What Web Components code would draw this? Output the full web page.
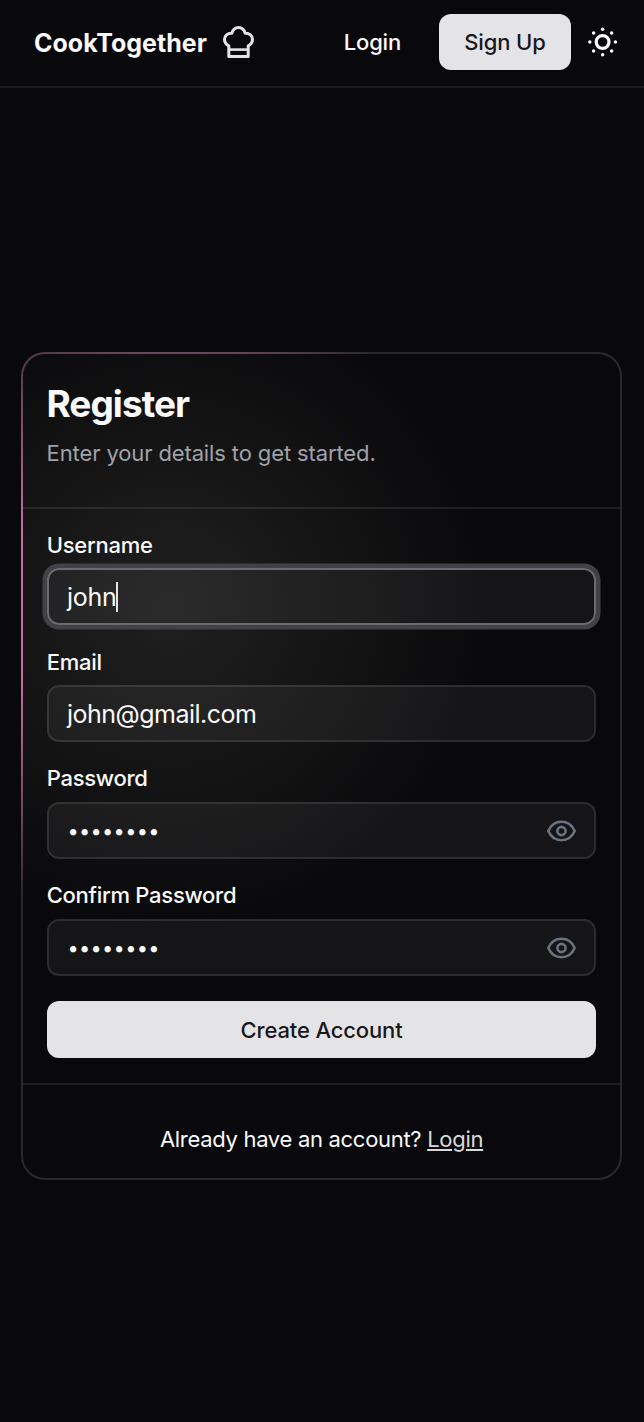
<!DOCTYPE html>
<html lang="en">
<head>
<meta charset="utf-8">
<title>CookTogether</title>
<style>
  html, body { margin: 0; background: #09090b; }
  body { color: #fafafa; font-family: Inter, "Liberation Sans", sans-serif; font-size: 22px; }
</style>
</head>
<body>
<cook-app></cook-app>
<script>
function define(name, markup) {
  const template = document.createElement('template');
  template.innerHTML = markup;
  customElements.define(name, class extends HTMLElement {
    constructor() {
      super();
      this.attachShadow({ mode: 'open' }).append(template.content.cloneNode(true));
    }
  });
}

define('chef-hat-icon', `
  <style>:host{display:block;width:33px;height:34px} svg{display:block}</style>
  <svg width="33" height="34" viewBox="0 0 33 34" fill="none" stroke="#e4e4e7" stroke-width="3" stroke-linejoin="round">
    <path d="M6.8 31.5V20.8C4 19.4 2.5 17 2.5 14.3C2.5 10.6 5.6 8 9.8 8.2C10.8 5 13.3 2.5 16.5 2.5S22.2 5 23.2 8.2C27.4 8 30.5 10.6 30.5 14.3C30.5 17 29 19.4 26.2 20.8V31.5Z"/>
    <path d="M7 24.6H26" stroke-width="2.6"/>
  </svg>`);

define('sun-icon', `
  <style>:host{display:block;width:30px;height:30px} svg{display:block}</style>
  <svg width="30" height="30" viewBox="-14.6 -15 30 30" fill="#fafafa">
    <circle r="6.4" fill="none" stroke="#fafafa" stroke-width="3.2"/>
    <circle cx="12.8" r="1.75"/><circle cx="-12.8" r="1.75"/>
    <circle cy="12.8" r="1.75"/><circle cy="-12.8" r="1.75"/>
    <circle cx="9" cy="9" r="1.75"/><circle cx="-9" cy="9" r="1.75"/>
    <circle cx="9" cy="-9" r="1.75"/><circle cx="-9" cy="-9" r="1.75"/>
  </svg>`);

define('eye-icon', `
  <style>:host{display:block;width:30px;height:22px} svg{display:block}</style>
  <svg width="30" height="22" viewBox="-15.5 -11 30 22" fill="none" stroke="#6b7280" stroke-width="2.6" stroke-linejoin="round">
    <path d="M-13.2 0C-10.4 -6.2 -5.8 -9.2 0 -9.2S10.4 -6.2 13.2 0C10.4 6.2 5.8 9.2 0 9.2S-10.4 6.2 -13.2 0Z"/>
    <circle r="4.1"/>
  </svg>`);

define('solid-button', `
  <style>
    :host{display:flex;align-items:center;justify-content:center;height:57px;border-radius:12px;
      background:#e4e4e7;color:#18181b;font-weight:500;font-size:22px;letter-spacing:-.14px}
  </style><slot></slot>`);

define('site-nav', `
  <style>
    :host{display:flex;align-items:center;box-sizing:border-box;height:88px;padding:0 26px 2px 34px;border-bottom:2px solid #1b1b1d}
    .brand{font-size:25px;font-weight:700;letter-spacing:0;line-height:32px;padding-top:2px}
    chef-hat-icon{margin-left:15px}
    .login{margin-left:auto;font-weight:500;letter-spacing:-.2px}
    solid-button{width:132px;height:56px;margin-left:38px}
    sun-icon{margin-left:17px}
  </style>
  <span class="brand">CookTogether</span><chef-hat-icon></chef-hat-icon>
  <span class="login">Login</span><solid-button>Sign Up</solid-button><sun-icon></sun-icon>`);

define('glow-card', `
  <style>
    :host{display:block;box-sizing:border-box;border:2px solid transparent;border-radius:24px;
      background:
        radial-gradient(324px circle at 147px 253px,#202020,#09090b) padding-box,
        radial-gradient(324px circle at 149px 255px,#7d61ca,#c87098 50%,#29292b) border-box;
      background-origin:padding-box,border-box}
    header{box-sizing:border-box;height:155px;padding:25px 24px 0;border-bottom:2px solid rgba(255,255,255,.085)}
    main{box-sizing:border-box;height:574px;padding:19.2px 24px 0}
    footer{box-sizing:border-box;height:95px;padding-top:38px;border-top:2px solid rgba(255,255,255,.085);
      line-height:32px;text-align:center}
  </style>
  <header><slot name="header"></slot></header>
  <main><slot></slot></main>
  <footer><slot name="footer"></slot></footer>`);

define('card-title', `
  <style>
    :host{display:block}
    h1{margin:0 0 0 -.6px;font-size:37px;line-height:49px;font-weight:700;letter-spacing:-.95px}
    p{margin:9px 0 0 -.4px;line-height:32px;color:#a1a1aa;letter-spacing:-.12px}
  </style>
  <h1><slot></slot></h1><p><slot name="description"></slot></p>`);

define('text-field', `
  <style>
    :host{display:block}
    .label{display:block;box-sizing:border-box;height:34px;padding-top:1px;line-height:33px;font-weight:500;letter-spacing:-.27px;margin:0 0 6px -.3px}
    :host([secret]) .label{padding-top:0}
    .box{display:flex;align-items:center;box-sizing:border-box;height:57px;padding:1.4px 18px 0;border:2px solid rgba(255,255,255,.145);
      border-radius:12px;background:rgba(255,255,255,.05);background-clip:padding-box;font-size:25px;letter-spacing:-.5px}
    :host([focused]) .box{padding-top:0;letter-spacing:-.3px;border-color:#6a6a72;box-shadow:0 0 0 4.5px #424246}
    :host([focused]) .box::after{content:"";width:1.6px;height:30px;background:#e4e4e7}
    :host([secret]) .box{padding-top:2px;padding-left:18.4px;font-size:20px;letter-spacing:.3px}
    ::slotted(eye-icon){margin-left:auto}
  </style>
  <span class="label"><slot name="label"></slot></span>
  <div class="box"><slot></slot><slot name="action"></slot></div>`);

define('register-form', `
  <style>
    :host{display:flex;flex-direction:column;gap:19.8px}
    solid-button{margin-top:5.8px}
  </style>
  <text-field focused><span slot="label">Username</span><span>john</span></text-field>
  <text-field><span slot="label">Email</span><span>john@gmail.com</span></text-field>
  <text-field secret><span slot="label">Password</span><span>••••••••</span><eye-icon slot="action"></eye-icon></text-field>
  <text-field secret><span slot="label">Confirm Password</span><span>••••••••</span><eye-icon slot="action"></eye-icon></text-field>
  <solid-button>Create Account</solid-button>`);

define('cook-app', `
  <style>
    :host{display:flex;flex-direction:column;height:1422px;overflow:hidden}
    glow-card{margin:264px 22px 0 21px;height:828px}
    .prompt{letter-spacing:-.3px}
    a{color:#d9d9dc;text-decoration:underline;text-decoration-thickness:1.6px;text-underline-offset:2px}
  </style>
  <site-nav></site-nav>
  <glow-card>
    <card-title slot="header">Register<span slot="description">Enter your details to get started.</span></card-title>
    <register-form></register-form>
    <span slot="footer" class="prompt">Already have an account? <a>Login</a></span>
  </glow-card>`);
</script>
</body>
</html>
